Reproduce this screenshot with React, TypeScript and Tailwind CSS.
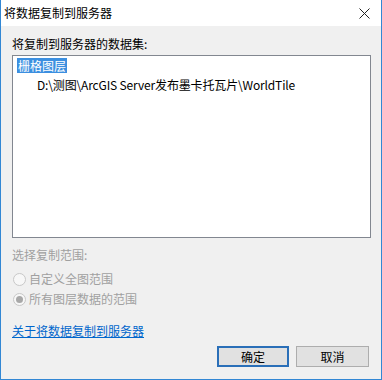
import React from "react";

export default function App() {
  return (
    <div
      className="w-[382px] h-[380px] flex flex-col border-x border-b border-[#3287d4] bg-[#f0f0f0] text-[12px] leading-[16px] text-black"
      style={{ fontFamily: '"Noto Sans CJK SC", sans-serif' }}
    >
      <div className="h-[26px] shrink-0 bg-white flex items-center justify-between pl-[3px] pr-[11px]">
        <span>将数据复制到服务器</span>
        <svg width="11" height="11" viewBox="0 0 11 11" className="mt-[1px]">
          <path d="M0.5 0.5 L10.5 10.5 M10.5 0.5 L0.5 10.5" stroke="#222" strokeWidth="1" />
        </svg>
      </div>
      <div className="flex-1 flex flex-col px-[11px] pt-[10px]">
        <div>将复制到服务器的数据集:</div>
        <div className="mt-[3px] h-[183px] w-[359px] border border-[#828790] bg-white pl-[4px] pt-[2px]">
          <div className="inline-block bg-[#3c8fe0] text-white px-[1px] leading-[15px] h-[15px]">栅格图层</div>
          <div className="pl-[20px] mt-[3px] tracking-[-0.15px]">D:\测图\ArcGIS Server发布墨卡托瓦片\WorldTile</div>
        </div>
        <div className="mt-[9px] text-[#a0a0a0]">选择复制范围:</div>
        <div className="mt-[8px] flex items-center gap-[3px] text-[#a0a0a0]">
          <span className="w-[13px] h-[13px] rounded-full border border-[#c8c8c8] bg-[#f7f7f7] ml-[1px]" />
          <span>自定义全图范围</span>
        </div>
        <div className="mt-[4px] flex items-center gap-[3px] text-[#a0a0a0]">
          <span className="w-[13px] h-[13px] rounded-full border border-[#c8c8c8] bg-[#f7f7f7] ml-[1px] flex items-center justify-center">
            <span className="w-[7px] h-[7px] rounded-full bg-[#a8a8a8]" />
          </span>
          <span>所有图层数据的范围</span>
        </div>
        <div className="mt-[16px]">
          <span className="text-[#0066cc] underline underline-offset-[1px]">关于将数据复制到服务器</span>
        </div>
        <div className="mt-[7px] flex justify-end gap-[7px] pr-[1px]">
          <button className="w-[72px] h-[21px] border-2 border-[#2a6fb8] bg-[#e1e1e1] text-[12px] leading-[16px] flex items-center justify-center">
            确定
          </button>
          <button className="w-[73px] h-[21px] border border-[#adadad] bg-[#e1e1e1] text-[12px] leading-[16px] flex items-center justify-center">
            取消
          </button>
        </div>
      </div>
    </div>
  );
}
